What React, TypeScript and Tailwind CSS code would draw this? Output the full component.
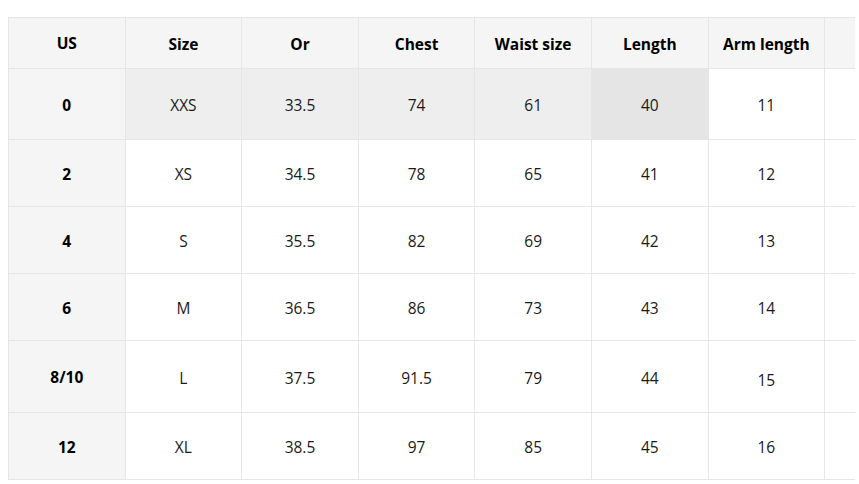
import React from 'react';

const headers = ['US', 'Size', 'Or', 'Chest', 'Waist size', 'Length', 'Arm length', ''];

const rows: { h: string; cells: string[] }[] = [
    { h: 'h-[71px]', cells: ['0', 'XXS', '33.5', '74', '61', '40', '11', ''] },
    { h: 'h-[67px]', cells: ['2', 'XS', '34.5', '78', '65', '41', '12', ''] },
    { h: 'h-[67px]', cells: ['4', 'S', '35.5', '82', '69', '42', '13', ''] },
    { h: 'h-[67px]', cells: ['6', 'M', '36.5', '86', '73', '43', '14', ''] },
    { h: 'h-[72px]', cells: ['8/10', 'L', '37.5', '91.5', '79', '44', '15', ''] },
    { h: 'h-[67px]', cells: ['12', 'XL', '38.5', '97', '85', '45', '16', ''] },
];

const cellBg = (ri: number, ci: number) => {
    if (ci === 0) return 'bg-[#f5f5f5] font-bold';
    if (ri === 0 && ci === 5) return 'bg-[#e5e5e5]';
    if (ri === 0 && ci < 5) return 'bg-[#eeeeee]';
    return 'bg-white';
};

const App: React.FC = () => {
    return (
        <div className="w-[859px] h-[484px] bg-white pt-[17px] pl-[8px] font-['Open_Sans',sans-serif] text-[15.5px] text-[#1a1a1a]">
            <div className="w-[847px] overflow-hidden">
                <table className="table-fixed border-collapse w-[933px]">
                    <colgroup>
                        {headers.map((_, i) => (
                            <col key={i} className="w-[116.6px]" />
                        ))}
                    </colgroup>
                    <thead>
                        <tr className="h-[51px] bg-[#f5f5f5]">
                            {headers.map((t, i) => (
                                <th
                                    key={i}
                                    className={`border border-[#e6e6e6] text-center align-middle font-bold text-black ${i === 0 ? 'pt-[1px]' : 'pt-[3px]'}`}
                                >
                                    {t}
                                </th>
                            ))}
                        </tr>
                    </thead>
                    <tbody>
                        {rows.map((r, ri) => (
                            <tr key={ri} className={r.h}>
                                {r.cells.map((c, ci) => (
                                    <td
                                        key={ci}
                                        className={`border border-[#e6e6e6] text-center align-middle ${cellBg(ri, ci)} ${ci === 0 ? 'text-black pt-[3px]' : 'pt-[4px]'} ${ri === 4 && ci === 6 ? 'pt-[9px]' : ''} ${ri === 4 && ci > 0 && ci < 6 ? 'pt-[3px]' : ''}`}
                                    >
                                        {c}
                                    </td>
                                ))}
                            </tr>
                        ))}
                    </tbody>
                </table>
            </div>
        </div>
    );
};

export default App;
